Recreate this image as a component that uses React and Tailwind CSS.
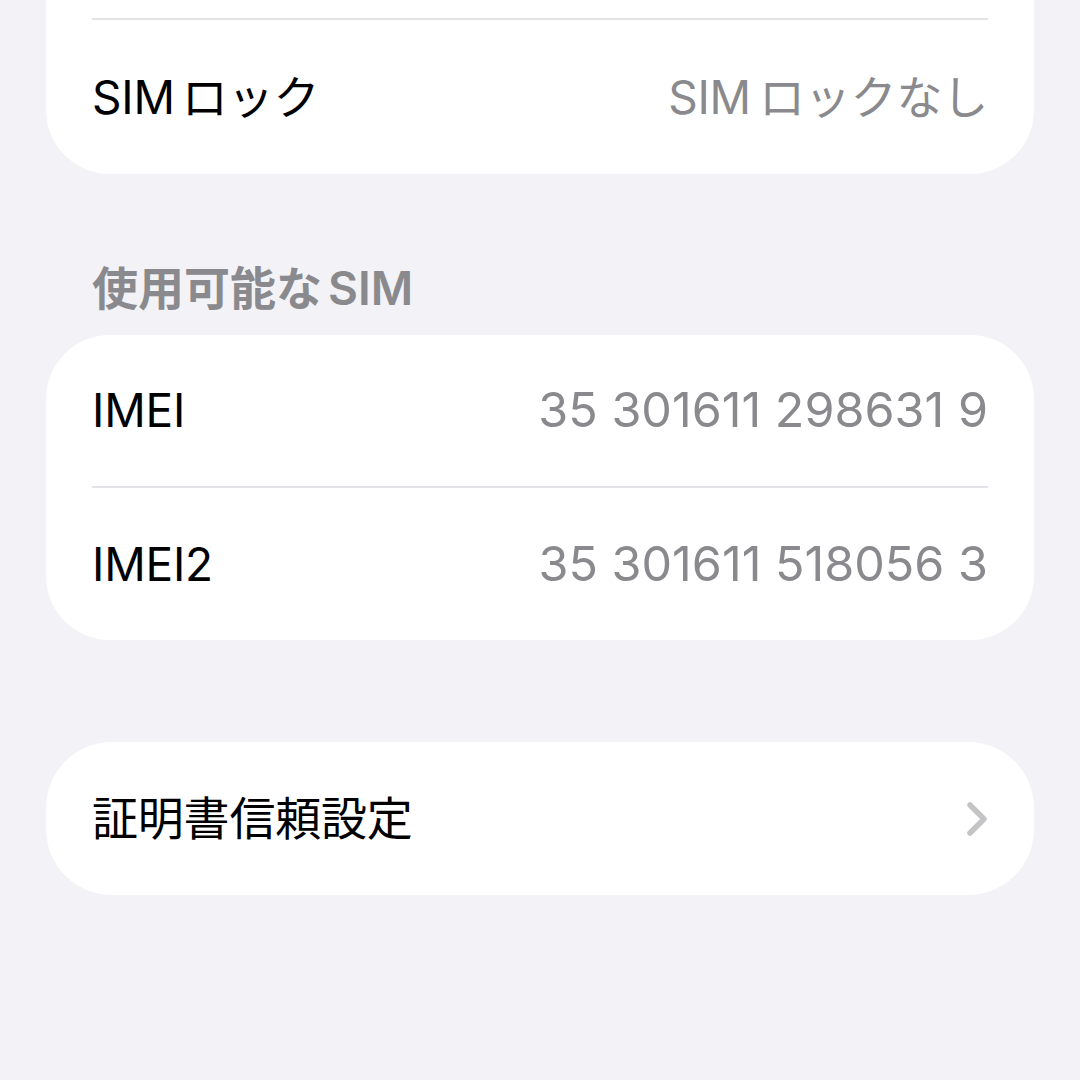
const FONT = "font-['Inter','Noto_Sans_CJK_JP',sans-serif]"

function Chevron() {
  return (
    <svg width="22" height="36" viewBox="0 0 22 36" fill="none" className="shrink-0">
      <path d="M4 4 L18 18 L4 32" stroke="#c4c4c7" strokeWidth="5.5" strokeLinecap="round" strokeLinejoin="round" />
    </svg>
  )
}

function Row({ label, value, chevron, height, numeric }) {
  return (
    <div className={`flex items-center justify-between px-[46px] ${height}`}>
      <span className="text-[46px] text-black tracking-[-0.2px]">{label}</span>
      {value && (
        <span className={`text-[#8a8a8e] ${numeric ? 'text-[48.5px] tracking-[0px]' : 'text-[46px] tracking-[-0.2px]'}`}>
          {value}
        </span>
      )}
      {chevron && <Chevron />}
    </div>
  )
}

function Separator() {
  return <div className="mx-[46px] h-[2px] bg-[#e3e3e8]" />
}

export default function App() {
  return (
    <div className={`h-[1080px] w-[1080px] overflow-hidden bg-[#f2f2f7] px-[46px] ${FONT}`}>
      {/* card cut off at the top */}
      <div className="bg-white rounded-b-[64px]">
        <div className="h-[18px]" />
        <Separator />
        <Row
          label={<>SIM<span className="ml-[7px]">ロック</span></>}
          value={<>SIM<span className="ml-[8px]">ロックなし</span></>}
          height="h-[154px]"
        />
      </div>

      <div className="pt-[88px] pb-[21px] px-[46px] leading-[52px] text-[46px] font-semibold text-[#8a8a8e]">
        使用可能な<span className="ml-[6px]">SIM</span>
      </div>

      <div className="bg-white rounded-[64px]">
        <Row label="IMEI" value="35 301611 298631 9" numeric height="h-[151px]" />
        <Separator />
        <Row label="IMEI2" value="35 301611 518056 3" numeric height="h-[152px]" />
      </div>

      <div className="h-[102px]" />

      <div className="bg-white rounded-[66px]">
        <Row label="証明書信頼設定" chevron height="h-[153px]" />
      </div>
    </div>
  )
}
